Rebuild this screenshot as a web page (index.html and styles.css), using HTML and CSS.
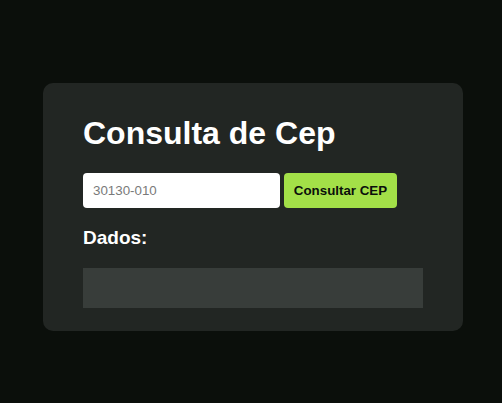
FILE: index.html
```html
<!DOCTYPE html>
<html lang="pt-BR">
<head>
<meta charset="utf-8">
<title>Consulta de Cep</title>
<link rel="stylesheet" href="styles.css">
</head>
<body>
<main class="card">
  <h1 class="title">Consulta de Cep</h1>
  <div class="form">
    <input class="cep-input" type="text" placeholder="30130-010">
    <button class="btn" type="button">Consultar CEP</button>
  </div>
  <h2 class="subtitle">Dados:</h2>
  <div class="result"></div>
</main>
</body>
</html>
```
FILE: styles.css
```css
html, body {
  margin: 0;
  padding: 0;
}
body {
  background: #0b0f0b;
  font-family: "Liberation Sans", Arial, sans-serif;
  color: #ffffff;
  display: flex;
  justify-content: center;
  align-items: flex-start;
  padding: 83px 0 0 4px;
  min-height: 403px;
  box-sizing: border-box;
}
.card {
  width: 420px;
  box-sizing: border-box;
  background: #222623;
  border-radius: 10px;
  padding: 32px 40px 23px;
}
.title {
  margin: 0;
  font-size: 32px;
  font-weight: bold;
  line-height: 37px;
}
.form {
  display: flex;
  gap: 4px;
  margin-top: 21px;
}
.cep-input {
  width: 197px;
  height: 35px;
  box-sizing: border-box;
  border: none;
  border-radius: 4px;
  background: #ffffff;
  padding: 0 10px;
  font-family: "Liberation Sans", Arial, sans-serif;
  font-size: 13.33px;
  color: #333;
  outline: none;
}
.cep-input::placeholder {
  color: #7a7a7a;
}
.btn {
  width: 113px;
  height: 35px;
  border: none;
  border-radius: 4px;
  background: #a3e048;
  color: #0b0f0b;
  font-family: "Liberation Sans", Arial, sans-serif;
  font-size: 13.33px;
  font-weight: bold;
  padding: 0;
}
.subtitle {
  margin: 19px 0 0;
  font-size: 19px;
  font-weight: bold;
  line-height: 22px;
}
.result {
  margin-top: 19px;
  height: 40px;
  background: #383d3a;
}
```
